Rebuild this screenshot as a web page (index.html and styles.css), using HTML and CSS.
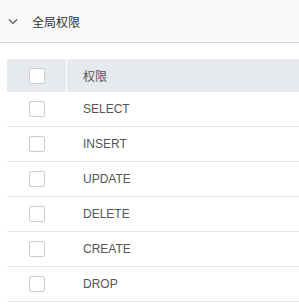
FILE: index.html
```html
<!DOCTYPE html>
<html lang="zh">
<head>
<meta charset="UTF-8" />
<title>全局权限</title>
<link rel="stylesheet" href="styles.css">
</head>
<body>
  <div class="panel-head">
    <svg class="chevron" width="10" height="6" viewBox="0 0 10 6"><path d="M1 0.5 L5 4.5 L9 0.5" fill="none" stroke="#555" stroke-width="1.2"/></svg>
    <span>全局权限</span>
  </div>

  <div class="grid">
    <div class="row head">
      <div class="cell check"><span class="box"></span></div>
      <div class="cell name">权限</div>
    </div>
    <div class="row"><div class="cell check"><span class="box"></span></div><div class="cell name">SELECT</div></div>
    <div class="row"><div class="cell check"><span class="box"></span></div><div class="cell name">INSERT</div></div>
    <div class="row"><div class="cell check"><span class="box"></span></div><div class="cell name">UPDATE</div></div>
    <div class="row"><div class="cell check"><span class="box"></span></div><div class="cell name">DELETE</div></div>
    <div class="row"><div class="cell check"><span class="box"></span></div><div class="cell name">CREATE</div></div>
    <div class="row"><div class="cell check"><span class="box"></span></div><div class="cell name">DROP</div></div>
  </div>
</body>
</html>
```
FILE: styles.css
```css
* {
  box-sizing: border-box;
}

body {
  margin: 0;
  background: #fff;
  font-family: "Liberation Sans", "Noto Sans CJK SC", sans-serif;
  font-size: 12px;
  color: #555;
}

.panel-head {
  height: 43px;
  background: #f9f9f9;
  border-bottom: 1px solid #d6d6d6;
  display: flex;
  align-items: center;
  padding-left: 8px;
  color: #333;
}

.panel-head .chevron {
  margin-right: 14px;
  margin-top: 1px;
}

.grid {
  margin: 16px 0 0 7px;
}

.row {
  display: flex;
  height: 35px;
  border-bottom: 1px solid #e6e6e6;
}

.row.head {
  height: 33px;
  background: #e6e9ee;
  border-bottom: none;
  color: #555;
}

.cell {
  display: flex;
  align-items: center;
}

.check {
  width: 60px;
  justify-content: center;
}

.row.head .check {
  border-right: 1px solid #fff;
}

.name {
  padding-left: 16px;
}

.box {
  width: 16px;
  height: 16px;
  border: 1px solid #ccc;
  border-radius: 2px;
  background: #fff;
}
```
